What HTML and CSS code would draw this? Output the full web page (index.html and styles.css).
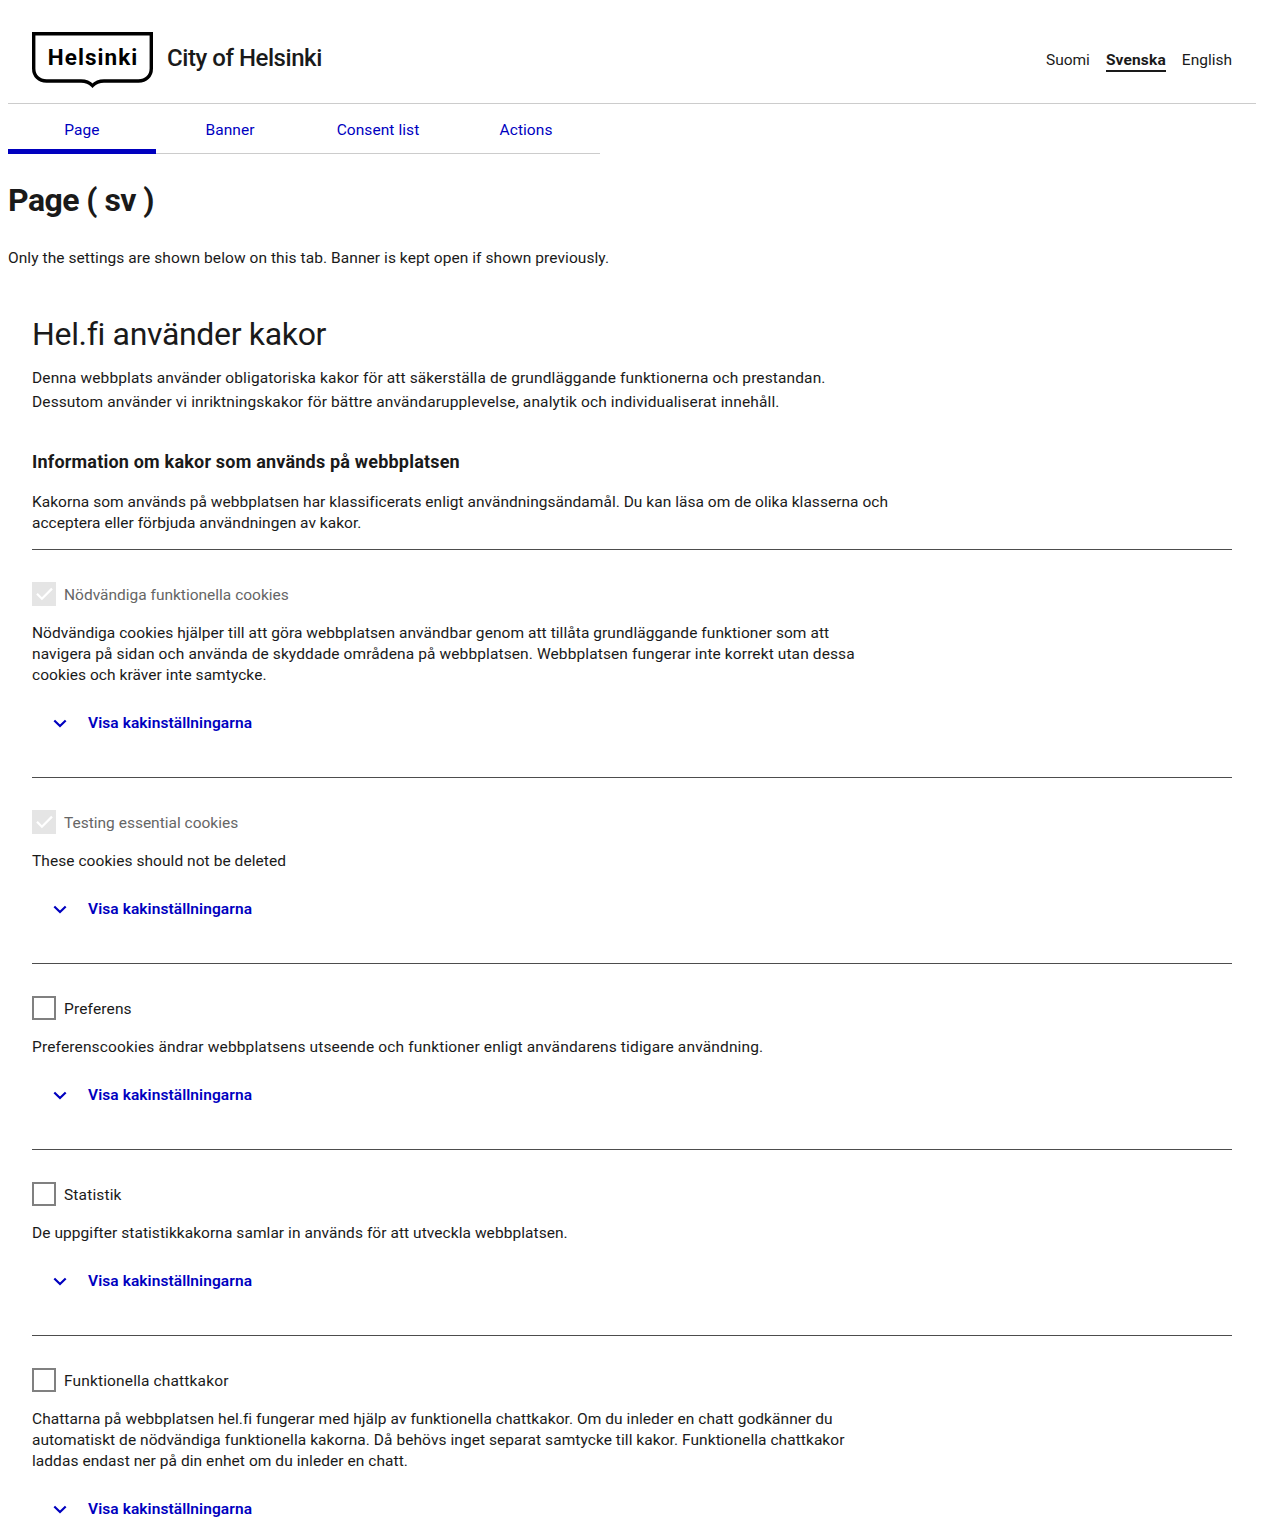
FILE: index.html
```html
<!DOCTYPE html>
<html lang="sv">
<head>
<meta charset="utf-8">
<title>City of Helsinki</title>
<link rel="stylesheet" href="styles.css">
</head>
<body>
<svg width="0" height="0" class="sprite" aria-hidden="true">
  <symbol id="chevron" viewBox="0 0 24 24"><path d="M6.300 9.500 12 15l5.700-5.500" fill="none" stroke="currentColor" stroke-width="2.200"/></symbol>
  <symbol id="check" viewBox="0 0 24 24"><path d="M5 11.800 9.900 16.700 20 6.600" fill="none" stroke="currentColor" stroke-width="2.200"/></symbol>
</svg>
<header class="header">
  <a class="brand">
    <svg class="logo" width="121" height="56" viewBox="0 0 121 56" role="img" aria-label="Helsinki">
      <path d="M1.700 1.700H119.300V36.500C119.300 44 114 49 106.500 49H72C67 49 63.500 50.500 60.500 53.600C57.500 50.500 54 49 49 49H14.500C7 49 1.700 44 1.700 36.500Z" fill="none" stroke="#000" stroke-width="3.400"/>
      <text class="logo-text" x="15.800" y="33.300" textLength="89.500" lengthAdjust="spacing">Helsinki</text>
    </svg>
    <span class="brand-name">City of Helsinki</span>
  </a>
  <nav class="languages">
    <a>Suomi</a>
    <a class="current">Svenska</a>
    <a>English</a>
  </nav>
</header>
<nav class="tabs">
  <a class="tab active">Page</a>
  <a class="tab">Banner</a>
  <a class="tab">Consent list</a>
  <a class="tab">Actions</a>
</nav>
<main>
  <h1>Page ( sv )</h1>
  <p class="note">Only the settings are shown below on this tab. Banner is kept open if shown previously.</p>
  <section class="settings">
    <h2>Hel.fi använder kakor</h2>
    <p class="intro">Denna webbplats använder obligatoriska kakor för att säkerställa de grundläggande funktionerna och prestandan.<br>Dessutom använder vi inriktningskakor för bättre användarupplevelse, analytik och individualiserat innehåll.</p>
    <h3>Information om kakor som används på webbplatsen</h3>
    <p class="summary">Kakorna som används på webbplatsen har klassificerats enligt användningsändamål. Du kan läsa om de olika klasserna och<br>acceptera eller förbjuda användningen av kakor.</p>

    <div class="group">
      <label class="choice disabled"><span class="box"><svg width="24" height="24"><use href="#check"/></svg></span>Nödvändiga funktionella cookies</label>
      <p>Nödvändiga cookies hjälper till att göra webbplatsen användbar genom att tillåta grundläggande funktioner som att<br><span class="loose">navigera på sidan och använda de skyddade områdena på webbplatsen. Webbplatsen fungerar inte korrekt utan dessa</span><br>cookies och kräver inte samtycke.</p>
      <button class="toggle"><svg width="24" height="24"><use href="#chevron"/></svg>Visa kakinställningarna</button>
    </div>
    <div class="group">
      <label class="choice disabled"><span class="box"><svg width="24" height="24"><use href="#check"/></svg></span>Testing essential cookies</label>
      <p>These cookies should not be deleted</p>
      <button class="toggle"><svg width="24" height="24"><use href="#chevron"/></svg>Visa kakinställningarna</button>
    </div>
    <div class="group">
      <label class="choice"><span class="box"></span>Preferens</label>
      <p class="wide">Preferenscookies ändrar webbplatsens utseende och funktioner enligt användarens tidigare användning.</p>
      <button class="toggle"><svg width="24" height="24"><use href="#chevron"/></svg>Visa kakinställningarna</button>
    </div>
    <div class="group">
      <label class="choice"><span class="box"></span>Statistik</label>
      <p>De uppgifter statistikkakorna samlar in används för att utveckla webbplatsen.</p>
      <button class="toggle"><svg width="24" height="24"><use href="#chevron"/></svg>Visa kakinställningarna</button>
    </div>
    <div class="group">
      <label class="choice"><span class="box"></span>Funktionella chattkakor</label>
      <p>Chattarna på webbplatsen hel.fi fungerar med hjälp av funktionella chattkakor. Om du inleder en chatt godkänner du<br>automatiskt de nödvändiga funktionella kakorna. Då behövs inget separat samtycke till kakor. Funktionella chattkakor<br>laddas endast ner på din enhet om du inleder en chatt.</p>
      <button class="toggle"><svg width="24" height="24"><use href="#chevron"/></svg>Visa kakinställningarna</button>
    </div>
  </section>
</main>
</body>
</html>
```
FILE: styles.css
```css
* { box-sizing: border-box; }
body {
  margin: 8px 8px 0;
  font: 15.5px/24px Roboto, "Liberation Sans", sans-serif;
  letter-spacing: 0.07px;
  color: #1a1a1a;
  background: #fff;
}
h1, h2, h3, p { margin: 0; white-space: nowrap; }
.sprite { display: block; }

.header {
  display: flex;
  justify-content: space-between;
  align-items: flex-start;
  height: 96px;
  padding: 24px 24px 0;
  border-bottom: 1px solid #ccc;
}
.brand { display: flex; gap: 14px; }
.logo { display: block; }
.logo-text { font-size: 22.5px; font-weight: 700; letter-spacing: 0; fill: #000; }
.brand-name { font-size: 24px; font-weight: 500; line-height: 52px; letter-spacing: -0.45px; }
.languages { display: flex; gap: 16px; padding-top: 16px; letter-spacing: 0; }
.languages .current { height: 24px; font-weight: 700; letter-spacing: 0.15px; border-bottom: 2px solid #1a1a1a; }

.tabs { display: flex; width: 592px; height: 50px; border-bottom: 1px solid #ccc; }
.tab { flex: 1; height: 50px; padding-top: 14px; text-align: center; color: #0000bf; }
.tab.active { border-bottom: 5px solid #0000bf; }

h1 { margin-top: 26px; font-size: 32px; line-height: 40px; font-weight: 700; letter-spacing: -0.55px; }
.note { margin-top: 26px; }

.settings { padding: 44px 24px 0; }
h2 { font-size: 32px; line-height: 40px; font-weight: 400; letter-spacing: -0.33px; }
.intro { margin-top: 12px; letter-spacing: 0.12px; }
h3 { margin-top: 36px; font-size: 18px; line-height: 24px; font-weight: 700; letter-spacing: 0.2px; }
.summary { margin: 18px 0 15px; line-height: 21px; letter-spacing: 0.03px; }

.group { padding: 32px 0; border-top: 1px solid #4d4d4d; }
.group:last-child { padding-bottom: 0; }
.group p { margin: 17px 0 15px; line-height: 21px; letter-spacing: 0.06px; }
.group .wide { letter-spacing: 0.15px; }
.group .loose { letter-spacing: 0.11px; }
.choice { display: flex; gap: 8px; line-height: 26px; height: 24px; letter-spacing: 0.15px; }
.box { width: 24px; height: 24px; border: 2px solid #808080; }
.disabled { color: #666; letter-spacing: 0; }
.disabled .box { border: 0; background: #e5e5e5; color: #fff; }
.box svg { display: block; }
.toggle {
  display: flex;
  align-items: center;
  gap: 16px;
  height: 44px;
  padding: 0 16px;
  border: 0;
  background: none;
  color: #0000bf;
  font: inherit;
  font-weight: 600;
  letter-spacing: 0.08px;
}
```
